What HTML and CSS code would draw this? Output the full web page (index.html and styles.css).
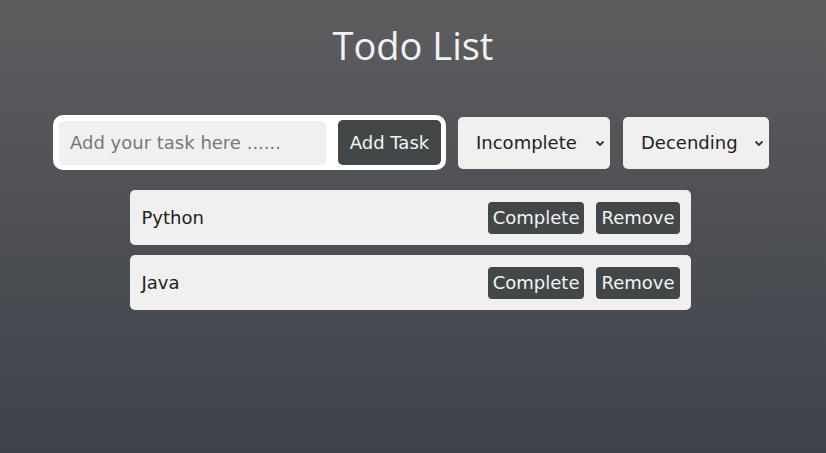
FILE: index.html
```html
<!DOCTYPE html>
<html>
<head>
<meta charset="utf-8">
<link rel="stylesheet" href="styles.css">
</head>
<body>
<header class="header"><h1 class="title">Todo List</h1></header>
<div class="controls">
  <form class="add-form">
    <input class="task-input" type="text" placeholder="Add your task here ......">
    <button class="add-btn" type="button">Add Task</button>
  </form>
  <div class="select-wrap select-status">
    <select class="filter"><option>Incomplete</option></select>
    <svg class="chev" width="10" height="7" viewBox="0 0 10 7"><path d="M1.5 1.5 L5 5 L8.5 1.5" fill="none" stroke="#333" stroke-width="1.8"/></svg>
  </div>
  <div class="select-wrap select-order">
    <select class="filter"><option>Decending</option></select>
    <svg class="chev" width="10" height="7" viewBox="0 0 10 7"><path d="M1.5 1.5 L5 5 L8.5 1.5" fill="none" stroke="#333" stroke-width="1.8"/></svg>
  </div>
</div>
<ul class="todo-list">
  <li class="todo"><span class="todo-text">Python</span><div class="actions"><button class="act-btn">Complete</button><button class="act-btn">Remove</button></div></li>
  <li class="todo"><span class="todo-text">Java</span><div class="actions"><button class="act-btn">Complete</button><button class="act-btn">Remove</button></div></li>
</ul>
</body>
</html>
```
FILE: styles.css
```css
html, body { margin: 0; padding: 0; }
body {
  min-height: 100vh;
  background: linear-gradient(to bottom, #5c5d5f 0%, #3e424a 100%);
  font-family: "DejaVu Sans", Verdana, sans-serif;
  color: #222;
}
.header { display: flex; justify-content: center; padding-top: 22px; }
.title {
  margin: 0;
  font-family: "Open Sans", "DejaVu Sans", sans-serif;
  font-weight: 400;
  font-size: 38px;
  line-height: 46px;
  color: #f2f2f2;
}
.controls {
  display: flex;
  justify-content: center;
  align-items: center;
  margin-top: 47px;
  padding-right: 4px;
}
.add-form {
  display: flex;
  align-items: center;
  background: #fff;
  border-radius: 10px;
  padding: 5px 5px 5px 6px;
  gap: 12px;
  margin: 0 12px 0 0;
  height: 45px;
}
.task-input {
  box-sizing: border-box;
  width: 267px;
  height: 44px;
  border: none;
  border-radius: 5px;
  background: #f0f0f0;
  padding: 0 11px;
  font-family: "DejaVu Sans", Verdana, sans-serif;
  font-size: 18px;
  color: #333;
  outline: none;
}
.task-input::placeholder { color: #777; }
.add-btn {
  box-sizing: border-box;
  width: 103px;
  height: 45px;
  border: none;
  border-radius: 5px;
  background: #434748;
  color: #f4f4f4;
  font-family: "DejaVu Sans", Verdana, sans-serif;
  font-size: 18px;
  padding: 0;
}
.select-wrap { position: relative; }
.select-status { margin-right: 13px; }
.filter {
  appearance: none;
  -webkit-appearance: none;
  box-sizing: border-box;
  height: 52px;
  border: none;
  border-radius: 5px;
  background: #f0f0f0;
  font-family: "DejaVu Sans", Verdana, sans-serif;
  font-size: 18px;
  color: #222;
  padding: 0 0 0 18px;
  outline: none;
}
.select-status .filter { width: 152px; }
.select-order .filter { width: 146px; }
.chev { position: absolute; right: 5px; top: 23px; pointer-events: none; }
.todo-list {
  list-style: none;
  margin: 20px auto 0;
  padding: 0;
  width: 561px;
  display: flex;
  flex-direction: column;
  gap: 10px;
  position: relative;
  left: -3px;
}
.todo {
  box-sizing: border-box;
  height: 55px;
  background: #f0f0f0;
  border-radius: 5px;
  display: flex;
  align-items: center;
  justify-content: space-between;
  padding: 0 11px 0 12px;
}
.todo-text { font-size: 18px; color: #222; }
.actions { display: flex; gap: 12px; }
.act-btn {
  height: 32px;
  border: none;
  border-radius: 4px;
  background: #434748;
  color: #f4f4f4;
  font-family: "DejaVu Sans", Verdana, sans-serif;
  font-size: 18px;
  padding: 0 5px;
}
```
